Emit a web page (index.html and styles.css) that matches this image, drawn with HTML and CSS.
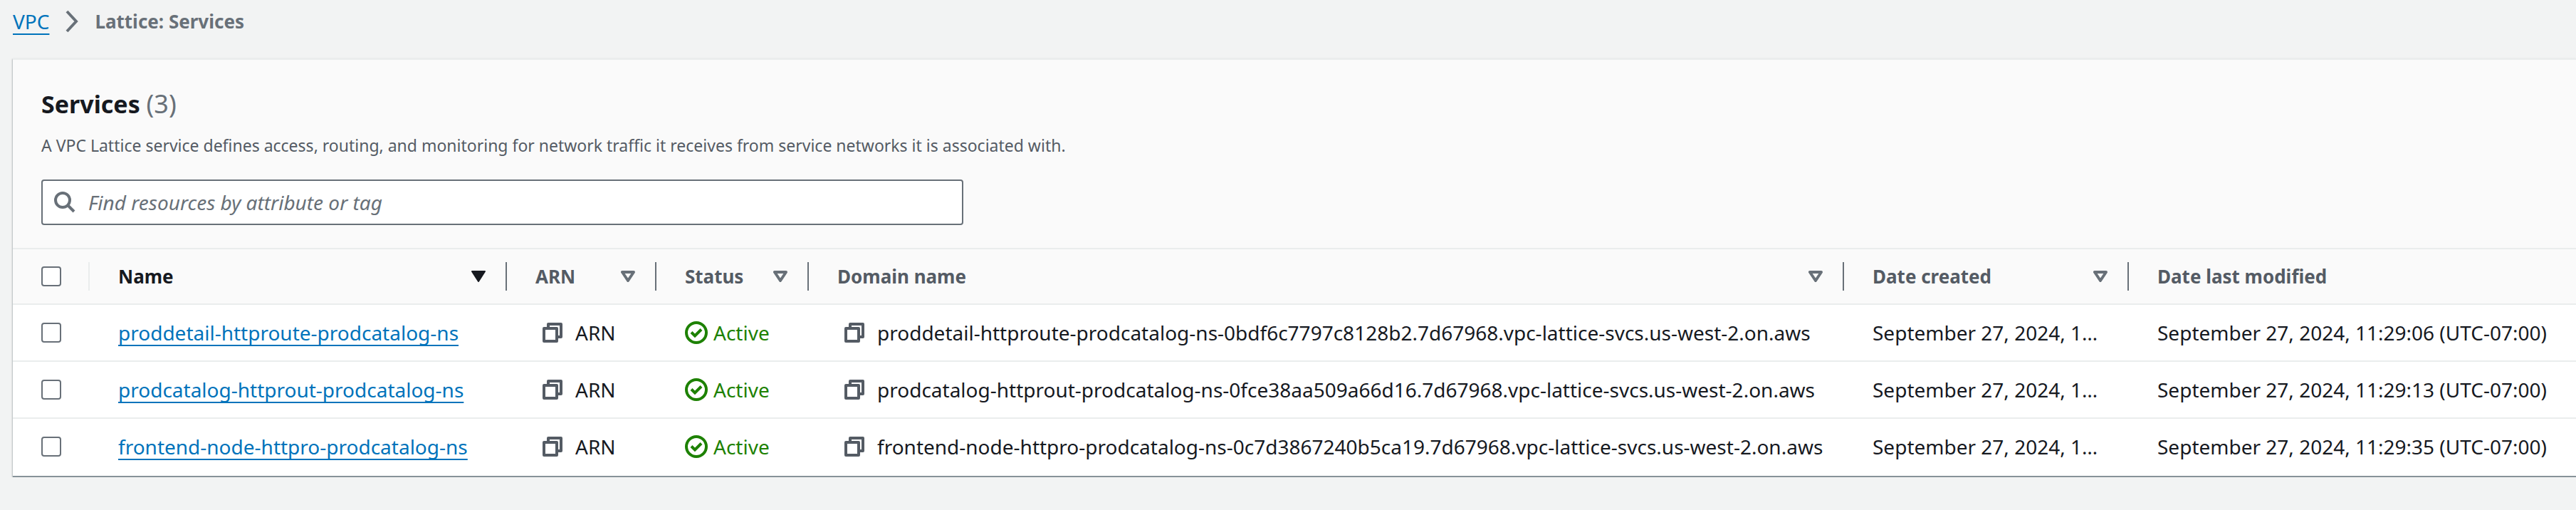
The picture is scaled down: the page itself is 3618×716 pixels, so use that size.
FILE: index.html
```html
<!DOCTYPE html>
<html lang="en">
<head>
<meta charset="utf-8">
<title>Lattice: Services</title>
<link rel="stylesheet" href="styles.css">
</head>
<body>
<svg class="sprite" aria-hidden="true">
  <symbol id="copy" viewBox="0 0 28 28"><path d="M2 8H20V26H2ZM8 8V2H26V20H20" fill="none" stroke="currentColor" stroke-width="4" stroke-linejoin="round"/></symbol>
  <symbol id="ok" viewBox="0 0 32 32"><circle cx="16" cy="16" r="14" fill="none" stroke="currentColor" stroke-width="4"/><path d="M9 15.5L14 20.5L23 11.5" fill="none" stroke="currentColor" stroke-width="4"/></symbol>
  <symbol id="sort" viewBox="0 0 20 16"><path d="M2 2H18L10 14Z" fill="none" stroke="currentColor" stroke-width="4" stroke-linejoin="round"/></symbol>
  <symbol id="sorted" viewBox="0 0 20 16"><path d="M1 1H19L10 15Z" fill="currentColor" stroke="currentColor" stroke-width="2" stroke-linejoin="round"/></symbol>
</svg>
<nav class="breadcrumb" aria-label="Breadcrumb">
  <a class="link" href="#">VPC</a>
  <svg class="chevron" viewBox="0 0 20 32" aria-hidden="true"><path d="M3 2L16 16L3 30" fill="none" stroke="currentColor" stroke-width="4"/></svg>
  <span class="current">Lattice: Services</span>
</nav>
<main class="panel">
  <header class="panel-head">
    <h1 class="title">Services <span class="count">(3)</span></h1>
    <p class="description">A VPC Lattice service defines access, routing, and monitoring for network traffic it receives from service networks it is associated with.</p>
    <label class="search">
      <svg class="search-icon" viewBox="0 0 30 30" aria-hidden="true"><path d="M19 19L28 28" fill="none" stroke="currentColor" stroke-width="4"/><circle cx="12" cy="12" r="10" fill="none" stroke="currentColor" stroke-width="4"/></svg>
      <input class="search-input" type="search" placeholder="Find resources by attribute or tag" aria-label="Find resources by attribute or tag">
    </label>
  </header>
  <table class="services">
    <colgroup><col class="c-check"><col class="c-name"><col class="c-arn"><col class="c-status"><col class="c-domain"><col class="c-created"><col></colgroup>
    <thead>
      <tr>
        <th class="light"><input class="check" type="checkbox" aria-label="Select all services"></th>
        <th class="active"><button class="sort">Name<svg class="arrow" aria-hidden="true"><use href="#sorted"/></svg></button></th>
        <th><button class="sort">ARN<svg class="arrow" aria-hidden="true"><use href="#sort"/></svg></button></th>
        <th><button class="sort">Status<svg class="arrow" aria-hidden="true"><use href="#sort"/></svg></button></th>
        <th><button class="sort">Domain name<svg class="arrow" aria-hidden="true"><use href="#sort"/></svg></button></th>
        <th><button class="sort">Date created<svg class="arrow" aria-hidden="true"><use href="#sort"/></svg></button></th>
        <th><button class="sort">Date last modified</button></th>
      </tr>
    </thead>
    <tbody>
      <tr>
        <td><input class="check" type="checkbox" aria-label="Select proddetail-httproute-prodcatalog-ns"></td>
        <td><a class="link" href="#">proddetail-httproute-prodcatalog-ns</a></td>
        <td><div class="copyable"><button class="copy" aria-label="Copy ARN"><svg class="copy-icon"><use href="#copy"/></svg></button>ARN</div></td>
        <td><div class="status"><svg class="status-icon" aria-hidden="true"><use href="#ok"/></svg>Active</div></td>
        <td><div class="copyable"><button class="copy" aria-label="Copy domain name"><svg class="copy-icon"><use href="#copy"/></svg></button>proddetail-httproute-prodcatalog-ns-0bdf6c7797c8128b2.7d67968.vpc-lattice-svcs.us-west-2.on.aws</div></td>
        <td>September 27, 2024, 1…</td>
        <td>September 27, 2024, 11:29:06 (UTC-07:00)</td>
      </tr>
      <tr>
        <td><input class="check" type="checkbox" aria-label="Select prodcatalog-httprout-prodcatalog-ns"></td>
        <td><a class="link" href="#">prodcatalog-httprout-prodcatalog-ns</a></td>
        <td><div class="copyable"><button class="copy" aria-label="Copy ARN"><svg class="copy-icon"><use href="#copy"/></svg></button>ARN</div></td>
        <td><div class="status"><svg class="status-icon" aria-hidden="true"><use href="#ok"/></svg>Active</div></td>
        <td><div class="copyable"><button class="copy" aria-label="Copy domain name"><svg class="copy-icon"><use href="#copy"/></svg></button>prodcatalog-httprout-prodcatalog-ns-0fce38aa509a66d16.7d67968.vpc-lattice-svcs.us-west-2.on.aws</div></td>
        <td>September 27, 2024, 1…</td>
        <td>September 27, 2024, 11:29:13 (UTC-07:00)</td>
      </tr>
      <tr>
        <td><input class="check" type="checkbox" aria-label="Select frontend-node-httpro-prodcatalog-ns"></td>
        <td><a class="link" href="#">frontend-node-httpro-prodcatalog-ns</a></td>
        <td><div class="copyable"><button class="copy" aria-label="Copy ARN"><svg class="copy-icon"><use href="#copy"/></svg></button>ARN</div></td>
        <td><div class="status"><svg class="status-icon" aria-hidden="true"><use href="#ok"/></svg>Active</div></td>
        <td><div class="copyable"><button class="copy" aria-label="Copy domain name"><svg class="copy-icon"><use href="#copy"/></svg></button>frontend-node-httpro-prodcatalog-ns-0c7d3867240b5ca19.7d67968.vpc-lattice-svcs.us-west-2.on.aws</div></td>
        <td>September 27, 2024, 1…</td>
        <td>September 27, 2024, 11:29:35 (UTC-07:00)</td>
      </tr>
    </tbody>
  </table>
</main>
</body>
</html>
```
FILE: styles.css
```css
* { box-sizing: border-box; }

body {
  margin: 0;
  background: #f2f3f3;
  color: #16191f;
  font: 28px/44px "Noto Sans", "Open Sans", sans-serif;
}

button, input { font: inherit; color: inherit; }
svg { display: block; flex: none; }
.sprite { position: absolute; width: 0; height: 0; }

.link {
  color: #0073bb;
  text-decoration: underline;
  text-decoration-thickness: 2px;
  text-underline-offset: 6px;
  text-decoration-skip-ink: none;
}

.breadcrumb {
  display: flex;
  align-items: center;
  gap: 22px;
  padding: 8px 18px 30px;
}
.chevron { width: 20px; height: 32px; color: #687078; }
.current { color: #687078; font-size: 26px; font-weight: 700; }

.panel {
  margin-left: 18px;
  border-top: 2px solid #eaeded;
  border-bottom: 2px solid #879299;
  background: #fff;
  box-shadow: 0 1px 2px rgba(0, 28, 36, .3), -1px 1px 2px rgba(0, 28, 36, .15);
}
.panel-head { padding: 38px 40px 32px; background: #fafafa; }
.title { margin: 0; font-size: 34px; line-height: 48px; font-weight: 700; }
.count { color: #687078; font-size: 36px; font-weight: 400; }
.description { margin: 14px 0 28px; color: #545b64; font-size: 23px; line-height: 40px; }

.search {
  display: flex;
  align-items: center;
  gap: 18px;
  width: 36.8%;
  height: 64px;
  padding: 0 16px;
  border: 2px solid #687078;
  border-radius: 4px;
  background: #fff;
  color: #687078;
}
.search-icon { width: 30px; height: 30px; }
.search-input { flex: 1; min-width: 0; border: 0; padding: 0; outline: 0; background: none; }
.search-input::placeholder { color: #687078; font-style: italic; opacity: 1; }

.services { width: 100%; table-layout: fixed; border-collapse: separate; border-spacing: 0; }
.c-check { width: 108px; }
.c-name { width: 586px; }
.c-arn { width: 210px; }
.c-status { width: 214px; }
.c-domain { width: 1454px; }
.c-created { width: 400px; }

.services th {
  height: 80px;
  padding: 0;
  border-top: 2px solid #eaeded;
  border-bottom: 2px solid #eaeded;
  background:
    linear-gradient(#687078, #687078) right center / 2px 40px no-repeat,
    #fafafa;
  color: #545b64;
  font-size: 26px;
  text-align: left;
}
.services th.light {
  background:
    linear-gradient(#eaeded, #eaeded) right center / 2px 40px no-repeat,
    #fafafa;
}
.services th:last-child { background: #fafafa; }
.services th.active { color: #16191f; }
.services th:first-child { padding-left: 40px; }

.sort {
  display: flex;
  align-items: center;
  justify-content: space-between;
  width: 100%;
  padding: 0 30px 0 40px;
  border: 0;
  background: none;
  font-weight: 700;
}
.arrow { width: 20px; height: 16px; color: #687078; }
.active .arrow { color: #16191f; }

.services td {
  height: 80px;
  padding: 0 40px;
  border-bottom: 2px solid #eaeded;
  white-space: nowrap;
}
.services tr:last-child td { border-bottom-color: transparent; }
.services td:first-child { padding-right: 0; }

.check {
  appearance: none;
  display: block;
  width: 28px;
  height: 28px;
  margin: 0;
  border: 2px solid #687078;
  border-radius: 4px;
  background: #fff;
}

.copyable { display: flex; align-items: center; gap: 18px; padding-left: 10px; }
.copy { padding: 0; border: 0; background: none; color: #545b64; }
.copy-icon { width: 28px; height: 28px; }
.status { display: flex; align-items: center; gap: 8px; color: #1d8102; }
.status-icon { width: 32px; height: 32px; }
```
